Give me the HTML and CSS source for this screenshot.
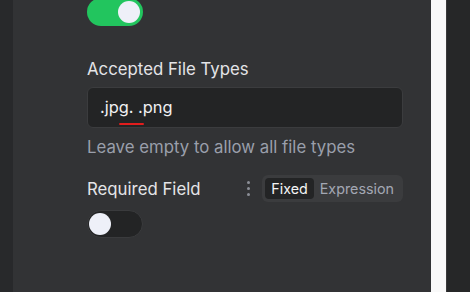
FILE: index.html
```html
<!DOCTYPE html>
<html lang="en">
<head>
  <meta charset="UTF-8">
  <title>Field Settings</title>
  <link rel="stylesheet" href="styles.css">
</head>
<body>
  <div class="layout">
    <div class="rail"></div>
    <div class="panel">
      <div class="toggle toggle-on top-toggle"><span class="knob"></span></div>

      <div class="field accepted">
        <label class="field-label" for="types">Accepted File Types</label>
        <div class="text-input" id="types">.jpg. .png<span class="spell-mark"></span></div>
        <p class="hint">Leave empty to allow all file types</p>
      </div>

      <div class="field required">
        <div class="field-head">
          <span class="field-label">Required Field</span>
          <div class="head-tools">
            <span class="kebab"><i></i><i></i><i></i></span>
            <div class="segmented">
              <span class="seg active">Fixed</span>
              <span class="seg">Expression</span>
            </div>
          </div>
        </div>
        <div class="toggle toggle-off"><span class="knob"></span></div>
      </div>
    </div>
    <div class="gutter"></div>
    <div class="edge"></div>
  </div>
</body>
</html>
```

FILE: styles.css
```css
* {
  margin: 0;
  padding: 0;
  box-sizing: border-box;
  font-family: 'Inter', 'Noto Sans', sans-serif;
}

body {
  width: 470px;
  height: 292px;
  overflow: hidden;
  background: #262728;
}

.layout {
  display: flex;
  height: 292px;
}

.rail {
  width: 13px;
  background: #28292b;
}

.panel {
  width: 418px;
  background: #323335;
  padding: 0 28px 0 74px;
}

.gutter {
  width: 15px;
  background: #f9f9f9;
}

.edge {
  flex: 1;
  background: #262728;
  border-left: 1px solid #3a3a3b;
}

.toggle {
  position: relative;
  width: 56px;
  height: 28px;
  border-radius: 14px;
}

.toggle .knob {
  position: absolute;
  top: 3px;
  width: 22px;
  height: 22px;
  border-radius: 50%;
  background: #eef0f8;
}

.toggle-on {
  background: #22c55e;
}

.toggle-on .knob {
  right: 3px;
}

.toggle-off {
  background: #232425;
  border: 1px solid #3a3b3d;
}

.toggle-off .knob {
  top: 2px;
  left: 1px;
}

.top-toggle {
  margin-top: -2px;
}

.field-label {
  display: block;
  font-size: 16.8px;
  line-height: 20px;
  color: #e4e4e7;
}

.accepted {
  margin-top: 33px;
}

.accepted .field-label {
  margin-bottom: 8px;
}

.text-input {
  position: relative;
  height: 41px;
  background: #232425;
  border: 1px solid #3b3c3e;
  border-radius: 6px;
  padding: 0 12px;
  font-size: 16.4px;
  line-height: 39px;
  color: #f1f1f3;
}

/* spell-check squiggle drawn over the value */
.spell-mark {
  position: absolute;
  left: 31px;
  top: 35px;
  width: 25px;
  height: 2px;
  border-radius: 1px;
  background: #e11d1d;
}

.hint {
  margin-top: 9px;
  font-size: 16.8px;
  line-height: 20px;
  color: #9a9fab;
}

.required {
  margin-top: 18px;
}

.field-head {
  display: flex;
  align-items: center;
  justify-content: space-between;
  margin-bottom: 8px;
}

.head-tools {
  display: flex;
  align-items: center;
  gap: 12px;
}

.kebab {
  display: flex;
  flex-direction: column;
  gap: 3px;
}

.kebab i {
  width: 3px;
  height: 3px;
  border-radius: 50%;
  background: #8c8f97;
}

.segmented {
  display: flex;
  align-items: center;
  height: 27px;
  padding: 3px;
  background: #3b3c3e;
  border-radius: 6px;
}

.seg {
  font-size: 14.3px;
  line-height: 21px;
  padding: 0 6px;
  color: #a3a7b3;
  border-radius: 4px;
}

.seg.active {
  background: #232425;
  color: #f4f4f5;
}
```
